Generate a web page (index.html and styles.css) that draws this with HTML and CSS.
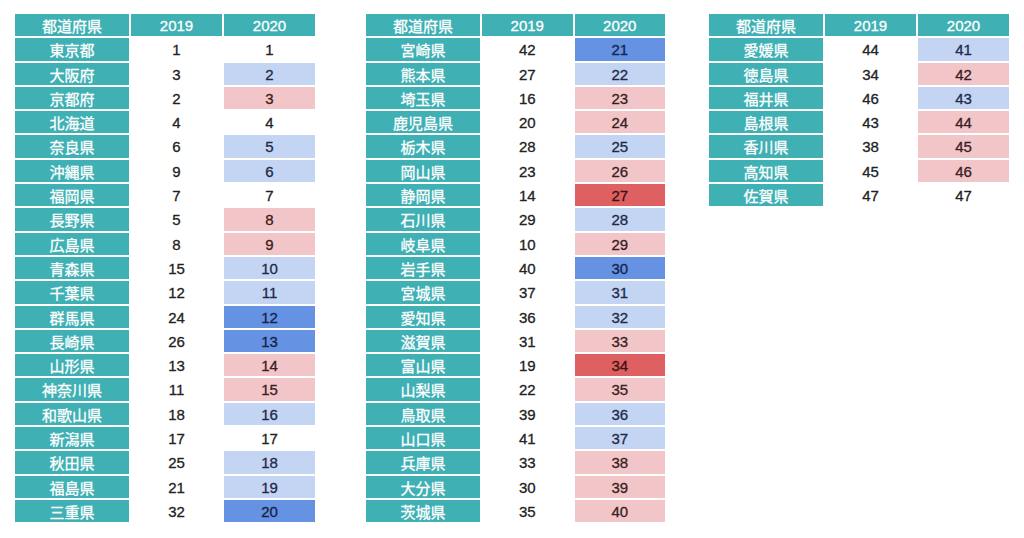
FILE: index.html
```html
<!DOCTYPE html>
<html lang="ja">
<head>
<meta charset="utf-8">
<title>都道府県ランキング</title>
<link rel="stylesheet" href="styles.css">
</head>
<body>
<main class="page">
  <section class="rank t1">
    <div class="h">都道府県</div><div class="h">2019</div><div class="h">2020</div>
    <div class="p">東京都</div><div class="n">1</div><div class="n">1</div>
    <div class="p">大阪府</div><div class="n">3</div><div class="n lb">2</div>
    <div class="p">京都府</div><div class="n">2</div><div class="n lr">3</div>
    <div class="p">北海道</div><div class="n">4</div><div class="n">4</div>
    <div class="p">奈良県</div><div class="n">6</div><div class="n lb">5</div>
    <div class="p">沖縄県</div><div class="n">9</div><div class="n lb">6</div>
    <div class="p">福岡県</div><div class="n">7</div><div class="n">7</div>
    <div class="p">長野県</div><div class="n">5</div><div class="n lr">8</div>
    <div class="p">広島県</div><div class="n">8</div><div class="n lr">9</div>
    <div class="p">青森県</div><div class="n">15</div><div class="n lb">10</div>
    <div class="p">千葉県</div><div class="n">12</div><div class="n lb">11</div>
    <div class="p">群馬県</div><div class="n">24</div><div class="n sb">12</div>
    <div class="p">長崎県</div><div class="n">26</div><div class="n sb">13</div>
    <div class="p">山形県</div><div class="n">13</div><div class="n lr">14</div>
    <div class="p">神奈川県</div><div class="n">11</div><div class="n lr">15</div>
    <div class="p">和歌山県</div><div class="n">18</div><div class="n lb">16</div>
    <div class="p">新潟県</div><div class="n">17</div><div class="n">17</div>
    <div class="p">秋田県</div><div class="n">25</div><div class="n lb">18</div>
    <div class="p">福島県</div><div class="n">21</div><div class="n lb">19</div>
    <div class="p">三重県</div><div class="n">32</div><div class="n sb">20</div>
  </section>
  <section class="rank t2">
    <div class="h">都道府県</div><div class="h">2019</div><div class="h">2020</div>
    <div class="p">宮崎県</div><div class="n">42</div><div class="n sb">21</div>
    <div class="p">熊本県</div><div class="n">27</div><div class="n lb">22</div>
    <div class="p">埼玉県</div><div class="n">16</div><div class="n lr">23</div>
    <div class="p">鹿児島県</div><div class="n">20</div><div class="n lr">24</div>
    <div class="p">栃木県</div><div class="n">28</div><div class="n lb">25</div>
    <div class="p">岡山県</div><div class="n">23</div><div class="n lr">26</div>
    <div class="p">静岡県</div><div class="n">14</div><div class="n sr">27</div>
    <div class="p">石川県</div><div class="n">29</div><div class="n lb">28</div>
    <div class="p">岐阜県</div><div class="n">10</div><div class="n lr">29</div>
    <div class="p">岩手県</div><div class="n">40</div><div class="n sb">30</div>
    <div class="p">宮城県</div><div class="n">37</div><div class="n lb">31</div>
    <div class="p">愛知県</div><div class="n">36</div><div class="n lb">32</div>
    <div class="p">滋賀県</div><div class="n">31</div><div class="n lr">33</div>
    <div class="p">富山県</div><div class="n">19</div><div class="n sr">34</div>
    <div class="p">山梨県</div><div class="n">22</div><div class="n lr">35</div>
    <div class="p">鳥取県</div><div class="n">39</div><div class="n lb">36</div>
    <div class="p">山口県</div><div class="n">41</div><div class="n lb">37</div>
    <div class="p">兵庫県</div><div class="n">33</div><div class="n lr">38</div>
    <div class="p">大分県</div><div class="n">30</div><div class="n lr">39</div>
    <div class="p">茨城県</div><div class="n">35</div><div class="n lr">40</div>
  </section>
  <section class="rank t3">
    <div class="h">都道府県</div><div class="h">2019</div><div class="h">2020</div>
    <div class="p">愛媛県</div><div class="n">44</div><div class="n lb">41</div>
    <div class="p">徳島県</div><div class="n">34</div><div class="n lr">42</div>
    <div class="p">福井県</div><div class="n">46</div><div class="n lb">43</div>
    <div class="p">島根県</div><div class="n">43</div><div class="n lr">44</div>
    <div class="p">香川県</div><div class="n">38</div><div class="n lr">45</div>
    <div class="p">高知県</div><div class="n">45</div><div class="n lr">46</div>
    <div class="p">佐賀県</div><div class="n">47</div><div class="n">47</div>
  </section>
</main>
</body>
</html>
```

FILE: styles.css
```css
* { box-sizing: border-box; }
html, body { margin: 0; padding: 0; background: #ffffff; }
body {
  width: 1024px;
  height: 538px;
  overflow: hidden;
  font-family: "Liberation Sans", "Noto Sans CJK JP", sans-serif;
  font-size: 15px;
  color: #222222;
}
.page {
  display: grid;
  grid-template-columns: 351px 343px 300px;
  align-items: start;
  padding: 14px 0 0 15px;
}
.rank {
  display: grid;
  grid-template-columns: 114px 1fr 1fr;
  grid-auto-rows: 22.3px;
  column-gap: 2px;
  row-gap: 2px;
}
.t1, .t3 { width: 300px; }
.t2 { width: 299px; }
.rank > div {
  line-height: 23px;
  text-align: center;
  white-space: nowrap;
  -webkit-text-stroke: 0.3px currentColor;
}
.h, .p {
  background: #3fb0b4;
  color: #ffffff;
}
.p { font-family: "Noto Sans CJK JP", "Liberation Sans", sans-serif; font-size: 15px; }
.h:first-child { font-family: "Noto Sans CJK JP", "Liberation Sans", sans-serif; }
.n { color: #222222; }
.lb { background: #c4d4f3; color: #1d2a48; }
.sb { background: #6592e3; color: #132449; }
.lr { background: #f2c6c8; color: #3a2020; }
.sr { background: #df6061; color: #3a1414; }
```
